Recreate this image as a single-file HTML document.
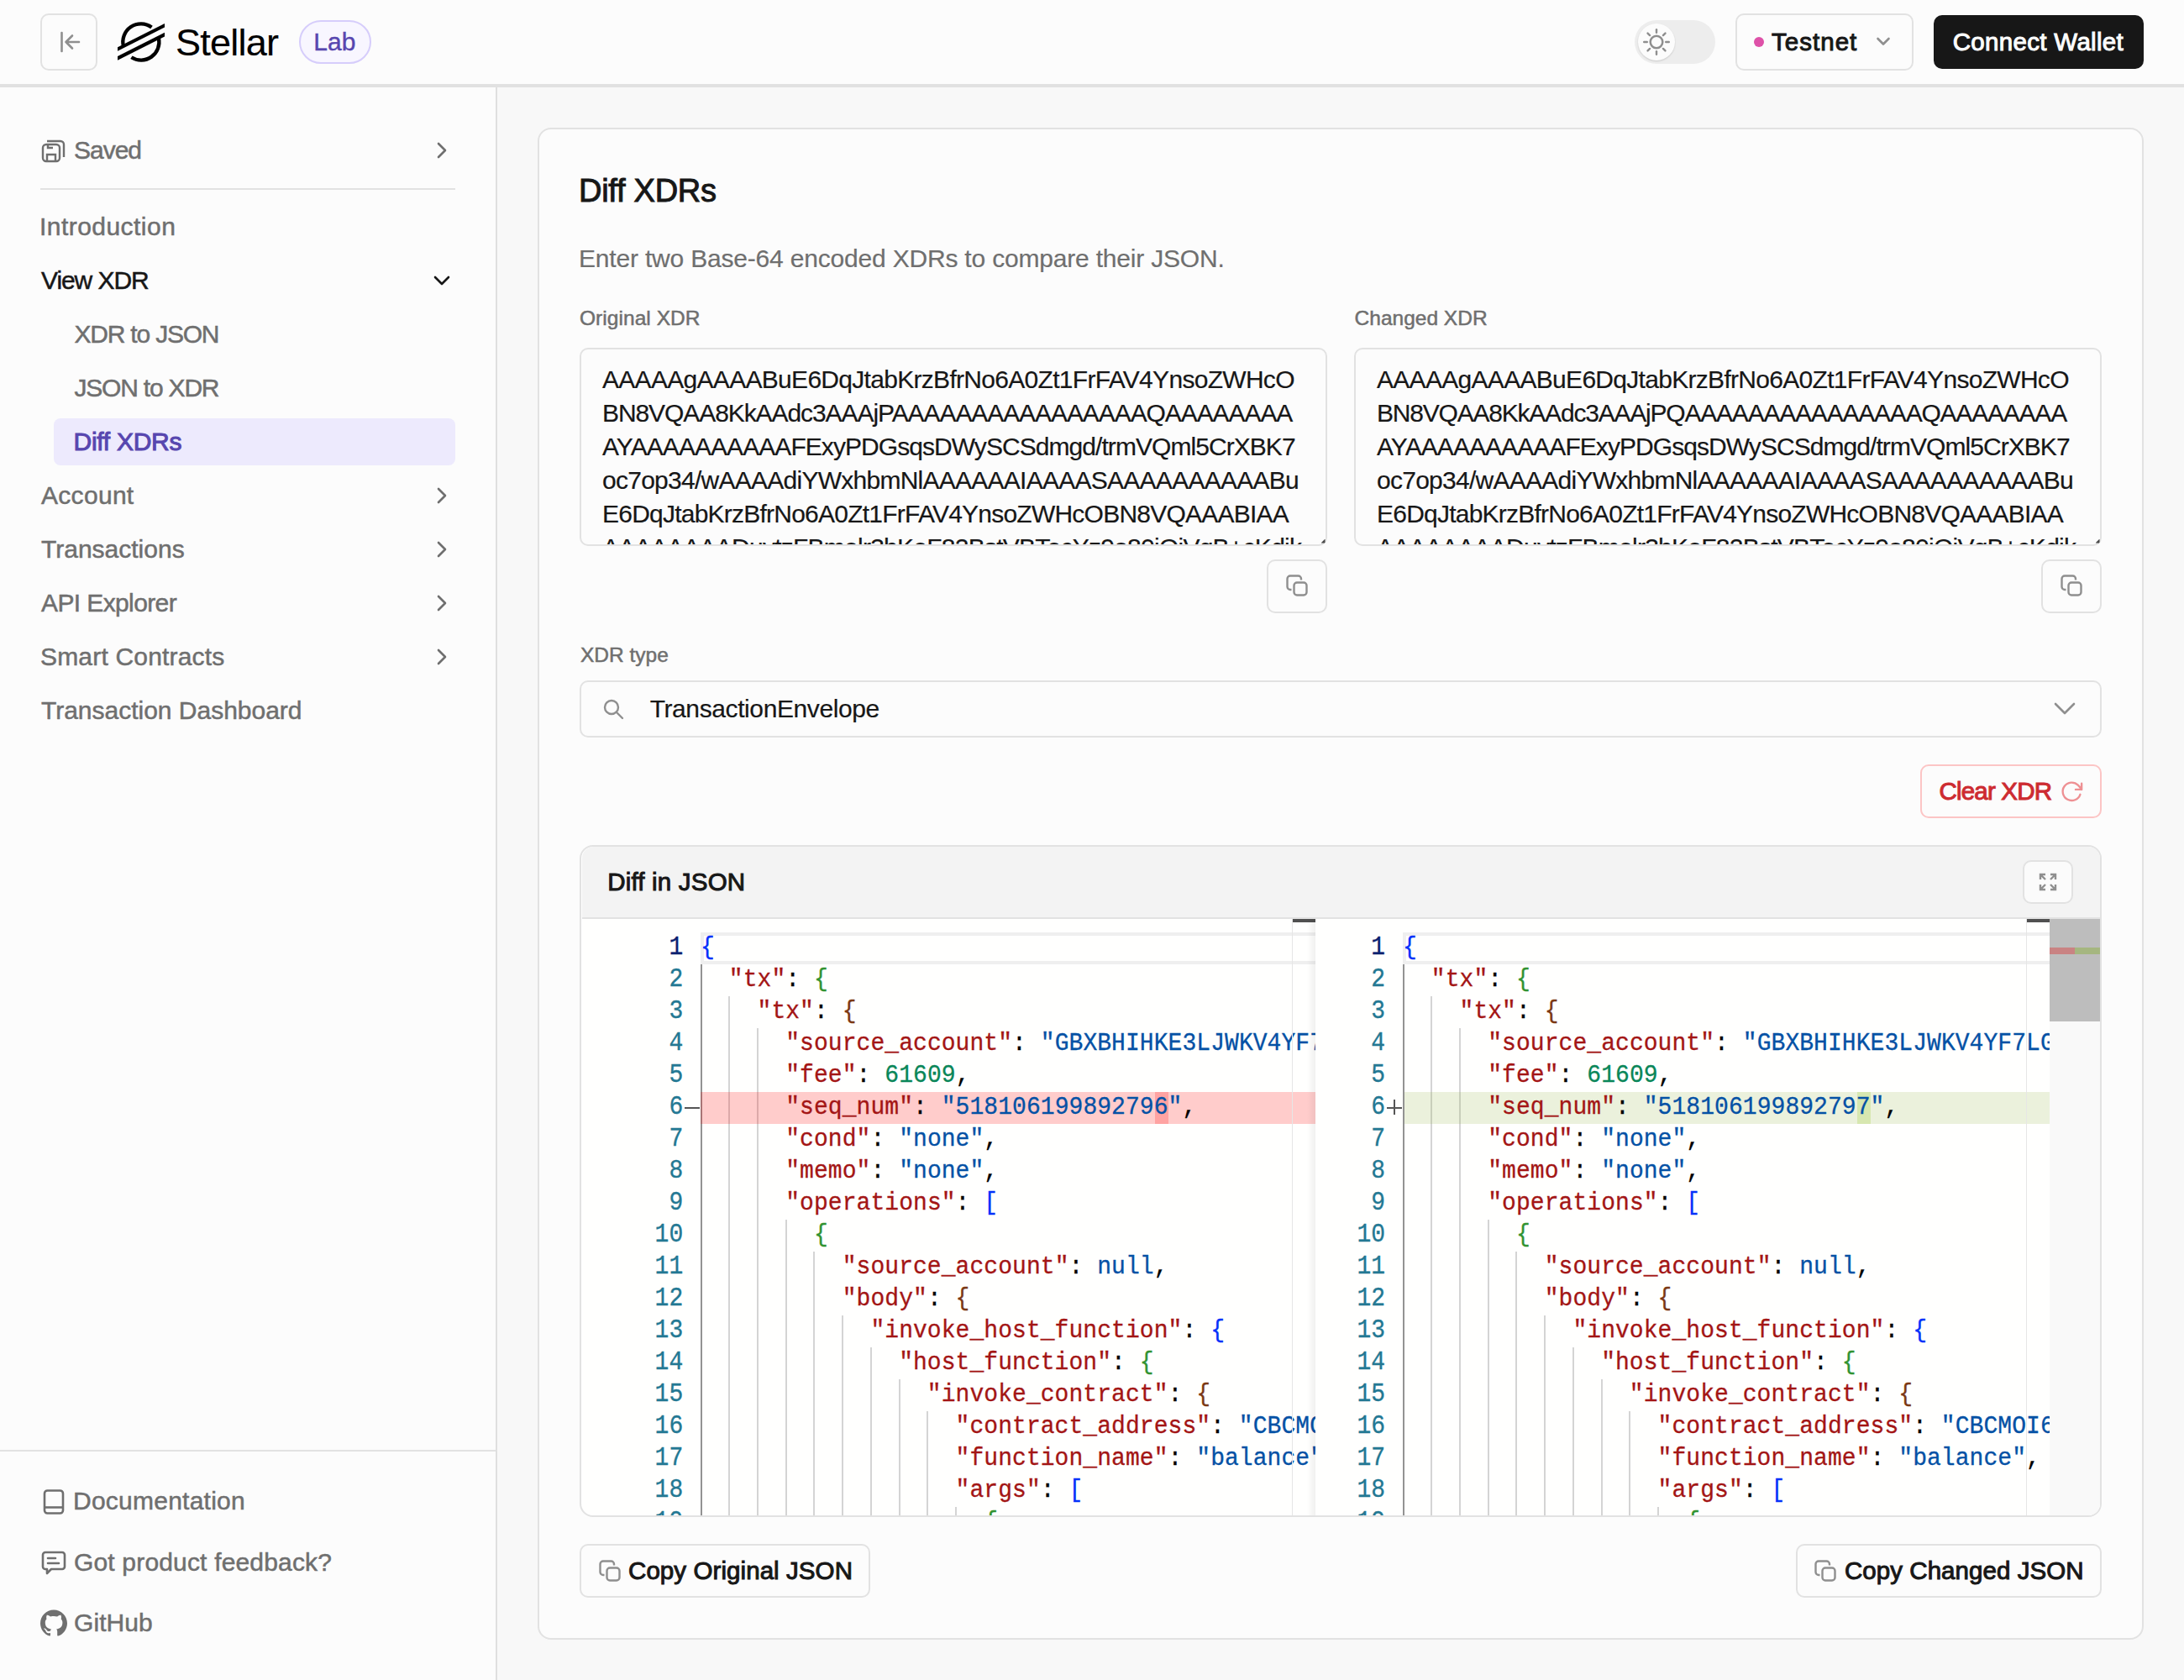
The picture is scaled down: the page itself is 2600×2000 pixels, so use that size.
<!DOCTYPE html><html><head><meta charset="utf-8"><style>
html,body{margin:0;padding:0;width:2600px;height:2000px;overflow:hidden;background:#f8f8f8}
.t{position:absolute;white-space:pre;font-family:"Liberation Sans",sans-serif}
.r{position:absolute;box-sizing:border-box}
.m{position:absolute;white-space:pre;font-family:"Liberation Mono",monospace;font-size:28px;line-height:38px;height:38px;color:#000;-webkit-text-stroke-width:0.3px;letter-spacing:0.06px}
</style></head><body>
<div class="r" style="left:0px;top:0px;width:2600px;height:2000px;background:#f8f8f8"></div>
<div class="r" style="left:0px;top:0px;width:2600px;height:100px;background:#fcfcfc"></div>
<div class="r" style="left:0px;top:100px;width:2600px;height:4px;background:#e1e1e1"></div>
<div class="r" style="left:0px;top:104px;width:590px;height:1896px;background:#fcfcfc"></div>
<div class="r" style="left:590px;top:104px;width:2px;height:1896px;background:#dfdfdf"></div>
<div class="r" style="left:48px;top:16px;width:68px;height:68px;border:2px solid #e2e2e2;border-radius:10px;box-sizing:border-box;background:#fcfcfc"></div>
<svg class="r" style="left:66px;top:34px;" width="36" height="32" viewBox="0 0 36 32" fill="none"><path d="M7.5 5 V27" stroke="#8f8f8f" stroke-width="2.6" stroke-linecap="round"/><path d="M28 16 H12.5 M20 8.5 L12.5 16 L20 23.5" stroke="#8f8f8f" stroke-width="2.6" stroke-linecap="round" stroke-linejoin="round"/></svg>
<svg class="r" style="left:140px;top:26px;" width="56" height="48" viewBox="0 0 56 48" fill="none"><path d="M7.0 29.2 A21.5 21.5 0 0 1 40.5 6.5" stroke="#000" stroke-width="4.3" fill="none"/><path d="M48.9 19.3 A21.5 21.5 0 0 1 16.4 42.2" stroke="#000" stroke-width="4.3" fill="none"/><path d="M0 30.25 L56 2 L56 6.5 L0 34.7 Z" fill="#000"/><path d="M0 41.1 L56 12.75 L56 17.4 L0 45.8 Z" fill="#000"/></svg>
<div class="t" style="left:209.0px;top:27.7px;font-size:45px;line-height:45px;color:#000;font-weight:400;letter-spacing:-0.76px;font-family:'Liberation Sans', sans-serif;-webkit-text-stroke:0.15px #000;">Stellar</div>
<div class="r" style="left:356px;top:24px;width:86px;height:52px;border:2px solid #d6cdfb;border-radius:26px;box-sizing:border-box;background:#f8f6ff"></div>
<div class="t" style="left:373.2px;top:34.6px;font-size:30px;line-height:30px;color:#5746af;font-weight:400;letter-spacing:0.12px;font-family:'Liberation Sans', sans-serif;-webkit-text-stroke:0.4px #5746af;">Lab</div>
<div class="r" style="left:1946px;top:24px;width:96px;height:52px;background:#ededed;border-radius:26px"></div>
<div class="r" style="left:1950px;top:28px;width:44px;height:44px;background:#fcfcfc;border-radius:50%;box-shadow:0 1px 2px rgba(0,0,0,0.15)"></div>
<svg class="r" style="left:1956px;top:33.5px;" width="32" height="32" viewBox="0 0 32 32" fill="none"><circle cx="16" cy="16" r="7.3" stroke="#8f8f8f" stroke-width="2.5"/><path d="M27.20 16.00 L30.80 16.00" stroke="#8f8f8f" stroke-width="2.4" stroke-linecap="round"/><path d="M23.92 23.92 L26.47 26.47" stroke="#8f8f8f" stroke-width="2.4" stroke-linecap="round"/><path d="M16.00 27.20 L16.00 30.80" stroke="#8f8f8f" stroke-width="2.4" stroke-linecap="round"/><path d="M8.08 23.92 L5.53 26.47" stroke="#8f8f8f" stroke-width="2.4" stroke-linecap="round"/><path d="M4.80 16.00 L1.20 16.00" stroke="#8f8f8f" stroke-width="2.4" stroke-linecap="round"/><path d="M8.08 8.08 L5.53 5.53" stroke="#8f8f8f" stroke-width="2.4" stroke-linecap="round"/><path d="M16.00 4.80 L16.00 1.20" stroke="#8f8f8f" stroke-width="2.4" stroke-linecap="round"/><path d="M23.92 8.08 L26.47 5.53" stroke="#8f8f8f" stroke-width="2.4" stroke-linecap="round"/></svg>
<div class="r" style="left:2066px;top:16px;width:212px;height:68px;border:2px solid #e2e2e2;border-radius:10px;box-sizing:border-box;background:#fcfcfc"></div>
<div class="r" style="left:2088px;top:44px;width:12px;height:12px;background:#de51a8;border-radius:50%"></div>
<div class="t" style="left:2109.0px;top:35.0px;font-size:29.5px;line-height:29.5px;color:#171717;font-weight:400;letter-spacing:1.03px;font-family:'Liberation Sans', sans-serif;-webkit-text-stroke:1.0px #171717;">Testnet</div>
<svg class="r" style="left:2232px;top:40px;" width="24" height="20" viewBox="0 0 24 20" fill="none"><path d="M3.5 6 L10 12.5 L16.5 6" stroke="#8f8f8f" stroke-width="2.6" stroke-linecap="round" stroke-linejoin="round"/></svg>
<div class="r" style="left:2302px;top:18px;width:250px;height:64px;background:#171717;border-radius:10px"></div>
<div class="t" style="left:2324.7px;top:35.0px;font-size:29.5px;line-height:29.5px;color:#fcfcfc;font-weight:400;letter-spacing:0.32px;font-family:'Liberation Sans', sans-serif;-webkit-text-stroke:1.0px #fcfcfc;">Connect Wallet</div>
<svg class="r" style="left:48px;top:165px;" width="32" height="30" viewBox="0 0 32 30" fill="none"><rect x="3" y="7" width="20" height="20" rx="4" stroke="#6f6f6f" stroke-width="2.4"/><path d="M8 27 V19 H18 V27" stroke="#6f6f6f" stroke-width="2.4"/><path d="M9 7 V11 H15" stroke="#6f6f6f" stroke-width="2.4"/><path d="M8 3 H24 A4 4 0 0 1 28 7 V22" stroke="#6f6f6f" stroke-width="2.4"/></svg>
<div class="t" style="left:88.0px;top:164.4px;font-size:30px;line-height:30px;color:#6f6f6f;font-weight:400;letter-spacing:-1.02px;font-family:'Liberation Sans', sans-serif;-webkit-text-stroke:0.5px #6f6f6f;">Saved</div>
<svg class="r" style="left:519px;top:169px;" width="14" height="20" viewBox="0 0 14 20" fill="none"><path d="M3 2 L11 10 L3 18" stroke="#6f6f6f" stroke-width="2.6" stroke-linecap="round" stroke-linejoin="round"/></svg>
<div class="r" style="left:48px;top:224px;width:494px;height:2px;background:#e2e2e2"></div>
<div class="r" style="left:64px;top:498px;width:478px;height:56px;background:#edeafd;border-radius:8px"></div>
<div class="t" style="left:47.0px;top:254.6px;font-size:30px;line-height:30px;color:#6f6f6f;font-weight:400;letter-spacing:0.46px;font-family:'Liberation Sans', sans-serif;-webkit-text-stroke:0.5px #6f6f6f;">Introduction</div>
<div class="t" style="left:49.0px;top:318.6px;font-size:30px;line-height:30px;color:#171717;font-weight:400;letter-spacing:-1.07px;font-family:'Liberation Sans', sans-serif;-webkit-text-stroke:0.5px #171717;">View XDR</div>
<div class="t" style="left:88.5px;top:382.6px;font-size:30px;line-height:30px;color:#6f6f6f;font-weight:400;letter-spacing:-1.20px;font-family:'Liberation Sans', sans-serif;-webkit-text-stroke:0.5px #6f6f6f;">XDR to JSON</div>
<div class="t" style="left:88.5px;top:446.6px;font-size:30px;line-height:30px;color:#6f6f6f;font-weight:400;letter-spacing:-1.20px;font-family:'Liberation Sans', sans-serif;-webkit-text-stroke:0.5px #6f6f6f;">JSON to XDR</div>
<div class="t" style="left:87.6px;top:510.6px;font-size:30px;line-height:30px;color:#5746af;font-weight:400;letter-spacing:-0.29px;font-family:'Liberation Sans', sans-serif;-webkit-text-stroke:1.0px #5746af;">Diff XDRs</div>
<div class="t" style="left:49.0px;top:574.6px;font-size:30px;line-height:30px;color:#6f6f6f;font-weight:400;letter-spacing:0.30px;font-family:'Liberation Sans', sans-serif;-webkit-text-stroke:0.5px #6f6f6f;">Account</div>
<svg class="r" style="left:519px;top:580px;" width="14" height="20" viewBox="0 0 14 20" fill="none"><path d="M3 2 L11 10 L3 18" stroke="#6f6f6f" stroke-width="2.6" stroke-linecap="round" stroke-linejoin="round"/></svg>
<div class="t" style="left:49.0px;top:638.6px;font-size:30px;line-height:30px;color:#6f6f6f;font-weight:400;letter-spacing:-0.00px;font-family:'Liberation Sans', sans-serif;-webkit-text-stroke:0.5px #6f6f6f;">Transactions</div>
<svg class="r" style="left:519px;top:644px;" width="14" height="20" viewBox="0 0 14 20" fill="none"><path d="M3 2 L11 10 L3 18" stroke="#6f6f6f" stroke-width="2.6" stroke-linecap="round" stroke-linejoin="round"/></svg>
<div class="t" style="left:49.0px;top:702.6px;font-size:30px;line-height:30px;color:#6f6f6f;font-weight:400;letter-spacing:-0.61px;font-family:'Liberation Sans', sans-serif;-webkit-text-stroke:0.5px #6f6f6f;">API Explorer</div>
<svg class="r" style="left:519px;top:708px;" width="14" height="20" viewBox="0 0 14 20" fill="none"><path d="M3 2 L11 10 L3 18" stroke="#6f6f6f" stroke-width="2.6" stroke-linecap="round" stroke-linejoin="round"/></svg>
<div class="t" style="left:48.0px;top:766.6px;font-size:30px;line-height:30px;color:#6f6f6f;font-weight:400;letter-spacing:0.18px;font-family:'Liberation Sans', sans-serif;-webkit-text-stroke:0.5px #6f6f6f;">Smart Contracts</div>
<svg class="r" style="left:519px;top:772px;" width="14" height="20" viewBox="0 0 14 20" fill="none"><path d="M3 2 L11 10 L3 18" stroke="#6f6f6f" stroke-width="2.6" stroke-linecap="round" stroke-linejoin="round"/></svg>
<div class="t" style="left:49.0px;top:830.6px;font-size:30px;line-height:30px;color:#6f6f6f;font-weight:400;letter-spacing:-0.01px;font-family:'Liberation Sans', sans-serif;-webkit-text-stroke:0.5px #6f6f6f;">Transaction Dashboard</div>
<svg class="r" style="left:515px;top:327px;" width="22" height="16" viewBox="0 0 22 16" fill="none"><path d="M3 3 L11 11 L19 3" stroke="#171717" stroke-width="2.6" stroke-linecap="round" stroke-linejoin="round"/></svg>
<div class="r" style="left:0px;top:1726px;width:590px;height:2px;background:#e2e2e2"></div>
<svg class="r" style="left:50px;top:1772px;" width="28" height="32" viewBox="0 0 28 32" fill="none"><rect x="3" y="2.5" width="22" height="27" rx="3.5" stroke="#6f6f6f" stroke-width="2.6"/><path d="M3 22.5 H25" stroke="#6f6f6f" stroke-width="2.6"/></svg>
<div class="t" style="left:87.0px;top:1772.4px;font-size:30px;line-height:30px;color:#6f6f6f;font-weight:400;letter-spacing:0.24px;font-family:'Liberation Sans', sans-serif;-webkit-text-stroke:0.5px #6f6f6f;">Documentation</div>
<svg class="r" style="left:49px;top:1845px;" width="30" height="30" viewBox="0 0 30 30" fill="none"><path d="M5 3 H25 A3 3 0 0 1 28 6 V20 A3 3 0 0 1 25 23 H12 L7 28 V23 H5 A3 3 0 0 1 2 20 V6 A3 3 0 0 1 5 3 Z" stroke="#6f6f6f" stroke-width="2.6" stroke-linejoin="round"/><path d="M8 10 H17 M8 16 H21" stroke="#6f6f6f" stroke-width="2.6" stroke-linecap="round"/></svg>
<div class="t" style="left:88.0px;top:1844.5px;font-size:30px;line-height:30px;color:#6f6f6f;font-weight:400;letter-spacing:0.17px;font-family:'Liberation Sans', sans-serif;-webkit-text-stroke:0.5px #6f6f6f;">Got product feedback?</div>
<svg class="r" style="left:48px;top:1916px;" width="32" height="32" viewBox="0 0 32 32" fill="none"><path fill="#6f6f6f" d="M16 0.4C7.2 0.4 0 7.6 0 16.4c0 7.1 4.6 13.100 10.900 15.200 0.8 0.1 1.100-0.3 1.100-0.8v-2.800c-4.500 1-5.400-2.100-5.400-2.100-0.700-1.900-1.800-2.400-1.800-2.400-1.500-1 0.100-1 0.100-1 1.600 0.1 2.500 1.700 2.500 1.700 1.400 2.500 3.800 1.800 4.700 1.400 0.1-1 0.600-1.800 1-2.200-3.600-0.400-7.300-1.800-7.300-7.900 0-1.800 0.600-3.200 1.700-4.300-0.2-0.400-0.700-2.100 0.200-4.300 0 0 1.300-0.4 4.400 1.700 1.300-0.4 2.600-0.5 4-0.5s2.700 0.2 4 0.5c3.100-2.100 4.400-1.700 4.400-1.700 0.900 2.200 0.300 3.900 0.200 4.300 1 1.100 1.700 2.600 1.700 4.300 0 6.100-3.700 7.500-7.300 7.900 0.600 0.500 1.100 1.500 1.100 2.900v4.400c0 0.400 0.300 0.900 1.100 0.800C27.400 29.500 32 23.500 32 16.400 32 7.600 24.800 0.400 16 0.400z"/></svg>
<div class="t" style="left:88.0px;top:1916.6px;font-size:30px;line-height:30px;color:#6f6f6f;font-weight:400;letter-spacing:0.07px;font-family:'Liberation Sans', sans-serif;-webkit-text-stroke:0.5px #6f6f6f;">GitHub</div>
<div class="r" style="left:640px;top:152px;width:1912px;height:1800px;border:2px solid #e2e2e2;border-radius:16px;box-sizing:border-box;background:#fcfcfc"></div>
<div class="t" style="left:689.0px;top:208.3px;font-size:38px;line-height:38px;color:#171717;font-weight:400;letter-spacing:-0.26px;font-family:'Liberation Sans', sans-serif;-webkit-text-stroke:1.0px #171717;">Diff XDRs</div>
<div class="t" style="left:689.0px;top:292.8px;font-size:30px;line-height:30px;color:#6f6f6f;font-weight:400;letter-spacing:-0.19px;font-family:'Liberation Sans', sans-serif;-webkit-text-stroke:0.2px #6f6f6f;">Enter two Base-64 encoded XDRs to compare their JSON.</div>
<div class="t" style="left:690.0px;top:367.3px;font-size:24.5px;line-height:24.5px;color:#6f6f6f;font-weight:400;letter-spacing:0.05px;font-family:'Liberation Sans', sans-serif;-webkit-text-stroke:0.5px #6f6f6f;">Original XDR</div>
<div class="t" style="left:1612.6px;top:367.3px;font-size:24.5px;line-height:24.5px;color:#6f6f6f;font-weight:400;letter-spacing:0.00px;font-family:'Liberation Sans', sans-serif;-webkit-text-stroke:0.5px #6f6f6f;">Changed XDR</div>
<div class="r" style="left:690px;top:414px;width:890px;height:236px;border:2px solid #e2e2e2;border-radius:10px;box-sizing:border-box;background:#fcfcfc;overflow:hidden">
<div class="t" style="left:25.0px;top:20.6px;font-size:30px;line-height:30px;color:#171717;font-weight:400;letter-spacing:-0.70px;font-family:'Liberation Sans', sans-serif;-webkit-text-stroke:0.2px #171717;">AAAAAgAAAABuE6DqJtabKrzBfrNo6A0Zt1FrFAV4YnsoZWHcO</div>
<div class="t" style="left:25.0px;top:60.6px;font-size:30px;line-height:30px;color:#171717;font-weight:400;letter-spacing:-1.08px;font-family:'Liberation Sans', sans-serif;-webkit-text-stroke:0.2px #171717;">BN8VQAA8KkAAdc3AAAjPAAAAAAAAAAAAAAAAQAAAAAAAA</div>
<div class="t" style="left:25.0px;top:100.6px;font-size:30px;line-height:30px;color:#171717;font-weight:400;letter-spacing:-0.94px;font-family:'Liberation Sans', sans-serif;-webkit-text-stroke:0.2px #171717;">AYAAAAAAAAAAFExyPDGsqsDWySCSdmgd/trmVQml5CrXBK7</div>
<div class="t" style="left:25.0px;top:140.6px;font-size:30px;line-height:30px;color:#171717;font-weight:400;letter-spacing:-0.74px;font-family:'Liberation Sans', sans-serif;-webkit-text-stroke:0.2px #171717;">oc7op34/wAAAAdiYWxhbmNlAAAAAAIAAAASAAAAAAAAAABu</div>
<div class="t" style="left:25.0px;top:180.6px;font-size:30px;line-height:30px;color:#171717;font-weight:400;letter-spacing:-0.77px;font-family:'Liberation Sans', sans-serif;-webkit-text-stroke:0.2px #171717;">E6DqJtabKrzBfrNo6A0Zt1FrFAV4YnsoZWHcOBN8VQAAABIAA</div>
<div class="t" style="left:25.0px;top:220.6px;font-size:30px;line-height:30px;color:#171717;font-weight:400;letter-spacing:-0.75px;font-family:'Liberation Sans', sans-serif;-webkit-text-stroke:0.2px #171717;">AAAAAAAADuvtzFBmelr3hKeF82BstVBTecYz9o80iQiVqB+cKdik</div>
</div>
<div class="r" style="left:1612px;top:414px;width:890px;height:236px;border:2px solid #e2e2e2;border-radius:10px;box-sizing:border-box;background:#fcfcfc;overflow:hidden">
<div class="t" style="left:25.0px;top:20.6px;font-size:30px;line-height:30px;color:#171717;font-weight:400;letter-spacing:-0.70px;font-family:'Liberation Sans', sans-serif;-webkit-text-stroke:0.2px #171717;">AAAAAgAAAABuE6DqJtabKrzBfrNo6A0Zt1FrFAV4YnsoZWHcO</div>
<div class="t" style="left:25.0px;top:60.6px;font-size:30px;line-height:30px;color:#171717;font-weight:400;letter-spacing:-1.21px;font-family:'Liberation Sans', sans-serif;-webkit-text-stroke:0.2px #171717;">BN8VQAA8KkAAdc3AAAjPQAAAAAAAAAAAAAAAQAAAAAAAA</div>
<div class="t" style="left:25.0px;top:100.6px;font-size:30px;line-height:30px;color:#171717;font-weight:400;letter-spacing:-0.94px;font-family:'Liberation Sans', sans-serif;-webkit-text-stroke:0.2px #171717;">AYAAAAAAAAAAFExyPDGsqsDWySCSdmgd/trmVQml5CrXBK7</div>
<div class="t" style="left:25.0px;top:140.6px;font-size:30px;line-height:30px;color:#171717;font-weight:400;letter-spacing:-0.74px;font-family:'Liberation Sans', sans-serif;-webkit-text-stroke:0.2px #171717;">oc7op34/wAAAAdiYWxhbmNlAAAAAAIAAAASAAAAAAAAAABu</div>
<div class="t" style="left:25.0px;top:180.6px;font-size:30px;line-height:30px;color:#171717;font-weight:400;letter-spacing:-0.77px;font-family:'Liberation Sans', sans-serif;-webkit-text-stroke:0.2px #171717;">E6DqJtabKrzBfrNo6A0Zt1FrFAV4YnsoZWHcOBN8VQAAABIAA</div>
<div class="t" style="left:25.0px;top:220.6px;font-size:30px;line-height:30px;color:#171717;font-weight:400;letter-spacing:-0.75px;font-family:'Liberation Sans', sans-serif;-webkit-text-stroke:0.2px #171717;">AAAAAAAADuvtzFBmelr3hKeF82BstVBTecYz9o80iQiVqB+cKdik</div>
</div>
<svg class="r" style="left:1573px;top:642px;" width="5" height="5" viewBox="0 0 5 5" fill="none"><path d="M0.5 4.5 L4.5 0.5 M2.5 4.5 L4.5 2.5" stroke="#444" stroke-width="1.4"/></svg>
<svg class="r" style="left:2495px;top:642px;" width="5" height="5" viewBox="0 0 5 5" fill="none"><path d="M0.5 4.5 L4.5 0.5 M2.5 4.5 L4.5 2.5" stroke="#444" stroke-width="1.4"/></svg>
<div class="r" style="left:1508px;top:666px;width:72px;height:64px;border:2px solid #e2e2e2;border-radius:10px;box-sizing:border-box;background:#fcfcfc"></div>
<svg class="r" style="left:1530px;top:683px;" width="28" height="28" viewBox="0 0 28 28" fill="none"><path d="M7.5 19 H6 A3.5 3.5 0 0 1 2.5 15.5 V6 A3.5 3.5 0 0 1 6 2.5 H15.5 A3.5 3.5 0 0 1 19 6 V7.5" stroke="#8f8f8f" stroke-width="2.4"/><rect x="10.5" y="10.5" width="15" height="15" rx="3.5" stroke="#8f8f8f" stroke-width="2.4"/></svg>
<div class="r" style="left:2430px;top:666px;width:72px;height:64px;border:2px solid #e2e2e2;border-radius:10px;box-sizing:border-box;background:#fcfcfc"></div>
<svg class="r" style="left:2452px;top:683px;" width="28" height="28" viewBox="0 0 28 28" fill="none"><path d="M7.5 19 H6 A3.5 3.5 0 0 1 2.5 15.5 V6 A3.5 3.5 0 0 1 6 2.5 H15.5 A3.5 3.5 0 0 1 19 6 V7.5" stroke="#8f8f8f" stroke-width="2.4"/><rect x="10.5" y="10.5" width="15" height="15" rx="3.5" stroke="#8f8f8f" stroke-width="2.4"/></svg>
<div class="t" style="left:691.0px;top:767.8px;font-size:24.5px;line-height:24.5px;color:#6f6f6f;font-weight:400;letter-spacing:-0.01px;font-family:'Liberation Sans', sans-serif;-webkit-text-stroke:0.5px #6f6f6f;">XDR type</div>
<div class="r" style="left:690px;top:810px;width:1812px;height:68px;border:2px solid #e2e2e2;border-radius:10px;box-sizing:border-box;background:#fcfcfc"></div>
<svg class="r" style="left:717px;top:830.5px;" width="28" height="28" viewBox="0 0 28 28" fill="none"><circle cx="11" cy="11" r="8" stroke="#8f8f8f" stroke-width="2.4"/><path d="M17 17 L24 24" stroke="#8f8f8f" stroke-width="2.4" stroke-linecap="round"/></svg>
<div class="t" style="left:773.7px;top:829.0px;font-size:30px;line-height:30px;color:#171717;font-weight:400;letter-spacing:-0.40px;font-family:'Liberation Sans', sans-serif;-webkit-text-stroke:0.2px #171717;">TransactionEnvelope</div>
<svg class="r" style="left:2444px;top:834px;" width="28" height="20" viewBox="0 0 28 20" fill="none"><path d="M3 4 L14 15 L25 4" stroke="#8f8f8f" stroke-width="2.6" stroke-linecap="round" stroke-linejoin="round"/></svg>
<div class="r" style="left:2286px;top:910px;width:216px;height:64px;border:2px solid #fcc5c5;border-radius:10px;box-sizing:border-box;background:#fcfcfc"></div>
<div class="t" style="left:2308.5px;top:927.0px;font-size:29.5px;line-height:29.5px;color:#cd2b31;font-weight:400;letter-spacing:-0.81px;font-family:'Liberation Sans', sans-serif;-webkit-text-stroke:1.0px #cd2b31;">Clear XDR</div>
<svg class="r" style="left:2451.7px;top:927.9px" width="28.5" height="28.5" viewBox="0 0 24 24" fill="none"><path d="M22 10s-2.005-2.732-3.634-4.362A9 9 0 1 0 20.576 15M22 10V4m0 6h-6" stroke="#e5484d" stroke-opacity="0.6" stroke-width="2" stroke-linecap="round" stroke-linejoin="round"/></svg>
<div class="r" style="left:690px;top:1006px;width:1812px;height:800px;border:2px solid #e2e2e2;border-radius:16px;box-sizing:border-box;background:#fefefe;overflow:hidden"></div>
<div class="r" style="left:693px;top:1008px;width:1807px;height:84px;background:#f3f3f3;border-radius:14px 14px 0 0"></div>
<div class="r" style="left:693px;top:1092px;width:1807px;height:2px;background:#e2e2e2"></div>
<div class="t" style="left:723.2px;top:1035.2px;font-size:29.5px;line-height:29.5px;color:#171717;font-weight:400;letter-spacing:0.20px;font-family:'Liberation Sans', sans-serif;-webkit-text-stroke:1.0px #171717;">Diff in JSON</div>
<div class="r" style="left:2408px;top:1024px;width:60px;height:52px;border:2px solid #e2e2e2;border-radius:10px;box-sizing:border-box;background:#fbfbfb"></div>
<svg class="r" style="left:2426px;top:1038px;" width="24" height="24" viewBox="0 0 24 24" fill="none"><path d="M3 9 V3 H9 M3 3 L9 9 M15 3 H21 V9 M21 3 L15 9 M3 15 V21 H9 M3 21 L9 15 M21 15 V21 H15 M21 21 L15 15" stroke="#8f8f8f" stroke-width="2.4"/></svg>
<div class="r" style="left:0;top:0;width:2600px;height:2000px;clip-path:inset(1094px 100px 196px 693px round 0 0 14px 14px)">
<div class="r" style="left:692px;top:1094px;width:874px;height:710px;overflow:hidden;background:#fffffe">
<div class="r" style="left:142px;top:16px;width:732px;height:38px;border:4px solid #efefef;border-right:none;box-sizing:border-box"></div>
<div class="r" style="left:142px;top:54px;width:2px;height:38px;background:#939393"></div>
<div class="r" style="left:142px;top:92px;width:2px;height:38px;background:#939393"></div>
<div class="r" style="left:175px;top:92px;width:2px;height:38px;background:#d4d4d4"></div>
<div class="r" style="left:142px;top:130px;width:2px;height:38px;background:#939393"></div>
<div class="r" style="left:175px;top:130px;width:2px;height:38px;background:#d4d4d4"></div>
<div class="r" style="left:209px;top:130px;width:2px;height:38px;background:#d4d4d4"></div>
<div class="r" style="left:142px;top:168px;width:2px;height:38px;background:#939393"></div>
<div class="r" style="left:175px;top:168px;width:2px;height:38px;background:#d4d4d4"></div>
<div class="r" style="left:209px;top:168px;width:2px;height:38px;background:#d4d4d4"></div>
<div class="r" style="left:142px;top:206px;width:2px;height:38px;background:#939393"></div>
<div class="r" style="left:175px;top:206px;width:2px;height:38px;background:#d4d4d4"></div>
<div class="r" style="left:209px;top:206px;width:2px;height:38px;background:#d4d4d4"></div>
<div class="r" style="left:142px;top:244px;width:2px;height:38px;background:#939393"></div>
<div class="r" style="left:175px;top:244px;width:2px;height:38px;background:#d4d4d4"></div>
<div class="r" style="left:209px;top:244px;width:2px;height:38px;background:#d4d4d4"></div>
<div class="r" style="left:142px;top:282px;width:2px;height:38px;background:#939393"></div>
<div class="r" style="left:175px;top:282px;width:2px;height:38px;background:#d4d4d4"></div>
<div class="r" style="left:209px;top:282px;width:2px;height:38px;background:#d4d4d4"></div>
<div class="r" style="left:142px;top:320px;width:2px;height:38px;background:#939393"></div>
<div class="r" style="left:175px;top:320px;width:2px;height:38px;background:#d4d4d4"></div>
<div class="r" style="left:209px;top:320px;width:2px;height:38px;background:#d4d4d4"></div>
<div class="r" style="left:142px;top:358px;width:2px;height:38px;background:#939393"></div>
<div class="r" style="left:175px;top:358px;width:2px;height:38px;background:#d4d4d4"></div>
<div class="r" style="left:209px;top:358px;width:2px;height:38px;background:#d4d4d4"></div>
<div class="r" style="left:243px;top:358px;width:2px;height:38px;background:#d4d4d4"></div>
<div class="r" style="left:142px;top:396px;width:2px;height:38px;background:#939393"></div>
<div class="r" style="left:175px;top:396px;width:2px;height:38px;background:#d4d4d4"></div>
<div class="r" style="left:209px;top:396px;width:2px;height:38px;background:#d4d4d4"></div>
<div class="r" style="left:243px;top:396px;width:2px;height:38px;background:#d4d4d4"></div>
<div class="r" style="left:276px;top:396px;width:2px;height:38px;background:#d4d4d4"></div>
<div class="r" style="left:142px;top:434px;width:2px;height:38px;background:#939393"></div>
<div class="r" style="left:175px;top:434px;width:2px;height:38px;background:#d4d4d4"></div>
<div class="r" style="left:209px;top:434px;width:2px;height:38px;background:#d4d4d4"></div>
<div class="r" style="left:243px;top:434px;width:2px;height:38px;background:#d4d4d4"></div>
<div class="r" style="left:276px;top:434px;width:2px;height:38px;background:#d4d4d4"></div>
<div class="r" style="left:142px;top:472px;width:2px;height:38px;background:#939393"></div>
<div class="r" style="left:175px;top:472px;width:2px;height:38px;background:#d4d4d4"></div>
<div class="r" style="left:209px;top:472px;width:2px;height:38px;background:#d4d4d4"></div>
<div class="r" style="left:243px;top:472px;width:2px;height:38px;background:#d4d4d4"></div>
<div class="r" style="left:276px;top:472px;width:2px;height:38px;background:#d4d4d4"></div>
<div class="r" style="left:310px;top:472px;width:2px;height:38px;background:#d4d4d4"></div>
<div class="r" style="left:142px;top:510px;width:2px;height:38px;background:#939393"></div>
<div class="r" style="left:175px;top:510px;width:2px;height:38px;background:#d4d4d4"></div>
<div class="r" style="left:209px;top:510px;width:2px;height:38px;background:#d4d4d4"></div>
<div class="r" style="left:243px;top:510px;width:2px;height:38px;background:#d4d4d4"></div>
<div class="r" style="left:276px;top:510px;width:2px;height:38px;background:#d4d4d4"></div>
<div class="r" style="left:310px;top:510px;width:2px;height:38px;background:#d4d4d4"></div>
<div class="r" style="left:344px;top:510px;width:2px;height:38px;background:#d4d4d4"></div>
<div class="r" style="left:142px;top:548px;width:2px;height:38px;background:#939393"></div>
<div class="r" style="left:175px;top:548px;width:2px;height:38px;background:#d4d4d4"></div>
<div class="r" style="left:209px;top:548px;width:2px;height:38px;background:#d4d4d4"></div>
<div class="r" style="left:243px;top:548px;width:2px;height:38px;background:#d4d4d4"></div>
<div class="r" style="left:276px;top:548px;width:2px;height:38px;background:#d4d4d4"></div>
<div class="r" style="left:310px;top:548px;width:2px;height:38px;background:#d4d4d4"></div>
<div class="r" style="left:344px;top:548px;width:2px;height:38px;background:#d4d4d4"></div>
<div class="r" style="left:378px;top:548px;width:2px;height:38px;background:#d4d4d4"></div>
<div class="r" style="left:142px;top:586px;width:2px;height:38px;background:#939393"></div>
<div class="r" style="left:175px;top:586px;width:2px;height:38px;background:#d4d4d4"></div>
<div class="r" style="left:209px;top:586px;width:2px;height:38px;background:#d4d4d4"></div>
<div class="r" style="left:243px;top:586px;width:2px;height:38px;background:#d4d4d4"></div>
<div class="r" style="left:276px;top:586px;width:2px;height:38px;background:#d4d4d4"></div>
<div class="r" style="left:310px;top:586px;width:2px;height:38px;background:#d4d4d4"></div>
<div class="r" style="left:344px;top:586px;width:2px;height:38px;background:#d4d4d4"></div>
<div class="r" style="left:378px;top:586px;width:2px;height:38px;background:#d4d4d4"></div>
<div class="r" style="left:411px;top:586px;width:2px;height:38px;background:#d4d4d4"></div>
<div class="r" style="left:142px;top:624px;width:2px;height:38px;background:#939393"></div>
<div class="r" style="left:175px;top:624px;width:2px;height:38px;background:#d4d4d4"></div>
<div class="r" style="left:209px;top:624px;width:2px;height:38px;background:#d4d4d4"></div>
<div class="r" style="left:243px;top:624px;width:2px;height:38px;background:#d4d4d4"></div>
<div class="r" style="left:276px;top:624px;width:2px;height:38px;background:#d4d4d4"></div>
<div class="r" style="left:310px;top:624px;width:2px;height:38px;background:#d4d4d4"></div>
<div class="r" style="left:344px;top:624px;width:2px;height:38px;background:#d4d4d4"></div>
<div class="r" style="left:378px;top:624px;width:2px;height:38px;background:#d4d4d4"></div>
<div class="r" style="left:411px;top:624px;width:2px;height:38px;background:#d4d4d4"></div>
<div class="r" style="left:142px;top:662px;width:2px;height:38px;background:#939393"></div>
<div class="r" style="left:175px;top:662px;width:2px;height:38px;background:#d4d4d4"></div>
<div class="r" style="left:209px;top:662px;width:2px;height:38px;background:#d4d4d4"></div>
<div class="r" style="left:243px;top:662px;width:2px;height:38px;background:#d4d4d4"></div>
<div class="r" style="left:276px;top:662px;width:2px;height:38px;background:#d4d4d4"></div>
<div class="r" style="left:310px;top:662px;width:2px;height:38px;background:#d4d4d4"></div>
<div class="r" style="left:344px;top:662px;width:2px;height:38px;background:#d4d4d4"></div>
<div class="r" style="left:378px;top:662px;width:2px;height:38px;background:#d4d4d4"></div>
<div class="r" style="left:411px;top:662px;width:2px;height:38px;background:#d4d4d4"></div>
<div class="r" style="left:142px;top:700px;width:2px;height:38px;background:#939393"></div>
<div class="r" style="left:175px;top:700px;width:2px;height:38px;background:#d4d4d4"></div>
<div class="r" style="left:209px;top:700px;width:2px;height:38px;background:#d4d4d4"></div>
<div class="r" style="left:243px;top:700px;width:2px;height:38px;background:#d4d4d4"></div>
<div class="r" style="left:276px;top:700px;width:2px;height:38px;background:#d4d4d4"></div>
<div class="r" style="left:310px;top:700px;width:2px;height:38px;background:#d4d4d4"></div>
<div class="r" style="left:344px;top:700px;width:2px;height:38px;background:#d4d4d4"></div>
<div class="r" style="left:378px;top:700px;width:2px;height:38px;background:#d4d4d4"></div>
<div class="r" style="left:411px;top:700px;width:2px;height:38px;background:#d4d4d4"></div>
<div class="r" style="left:445px;top:700px;width:2px;height:38px;background:#d4d4d4"></div>
<div class="r" style="left:142px;top:206px;width:732px;height:38px;background:rgba(255,0,0,0.2)"></div>
<div class="r" style="left:683px;top:206px;width:16px;height:38px;background:rgba(255,0,0,0.2)"></div>
<div class="r" style="left:0;top:0;width:874px;height:710px;overflow:hidden">
<div class="m" style="right:752.7px;top:16px;color:#0b216f;transform:scaleY(1.11);transform-origin:0 26.5px">1</div>
<div class="m" style="left:142.1px;top:16px;transform:scaleY(1.07);transform-origin:0 26.5px"><span style="color:#0431fa">{</span></div>
<div class="m" style="right:752.7px;top:54px;color:#237893;transform:scaleY(1.11);transform-origin:0 26.5px">2</div>
<div class="m" style="left:175.82000000000002px;top:54px;transform:scaleY(1.07);transform-origin:0 26.5px"><span style="color:#a31515">&quot;tx&quot;</span><span style="color:#000000">: </span><span style="color:#319331">{</span></div>
<div class="m" style="right:752.7px;top:92px;color:#237893;transform:scaleY(1.11);transform-origin:0 26.5px">3</div>
<div class="m" style="left:209.54000000000005px;top:92px;transform:scaleY(1.07);transform-origin:0 26.5px"><span style="color:#a31515">&quot;tx&quot;</span><span style="color:#000000">: </span><span style="color:#7b3814">{</span></div>
<div class="m" style="right:752.7px;top:130px;color:#237893;transform:scaleY(1.11);transform-origin:0 26.5px">4</div>
<div class="m" style="left:243.25999999999996px;top:130px;transform:scaleY(1.07);transform-origin:0 26.5px"><span style="color:#a31515">&quot;source_account&quot;</span><span style="color:#000000">: </span><span style="color:#0451a5">&quot;GBXBHIHKE3LJWKV4YF7LG2HIBUM3OULLCQCXQYT3FBSWDXBYCN6FK5LP&quot;</span><span style="color:#000000">,</span></div>
<div class="m" style="right:752.7px;top:168px;color:#237893;transform:scaleY(1.11);transform-origin:0 26.5px">5</div>
<div class="m" style="left:243.25999999999996px;top:168px;transform:scaleY(1.07);transform-origin:0 26.5px"><span style="color:#a31515">&quot;fee&quot;</span><span style="color:#000000">: </span><span style="color:#098658">61609</span><span style="color:#000000">,</span></div>
<div class="m" style="right:752.7px;top:206px;color:#237893;transform:scaleY(1.11);transform-origin:0 26.5px">6</div>
<div class="m" style="left:243.25999999999996px;top:206px;transform:scaleY(1.07);transform-origin:0 26.5px"><span style="color:#a31515">&quot;seq_num&quot;</span><span style="color:#000000">: </span><span style="color:#0451a5">&quot;518106199892796&quot;</span><span style="color:#000000">,</span></div>
<div class="m" style="right:752.7px;top:244px;color:#237893;transform:scaleY(1.11);transform-origin:0 26.5px">7</div>
<div class="m" style="left:243.25999999999996px;top:244px;transform:scaleY(1.07);transform-origin:0 26.5px"><span style="color:#a31515">&quot;cond&quot;</span><span style="color:#000000">: </span><span style="color:#0451a5">&quot;none&quot;</span><span style="color:#000000">,</span></div>
<div class="m" style="right:752.7px;top:282px;color:#237893;transform:scaleY(1.11);transform-origin:0 26.5px">8</div>
<div class="m" style="left:243.25999999999996px;top:282px;transform:scaleY(1.07);transform-origin:0 26.5px"><span style="color:#a31515">&quot;memo&quot;</span><span style="color:#000000">: </span><span style="color:#0451a5">&quot;none&quot;</span><span style="color:#000000">,</span></div>
<div class="m" style="right:752.7px;top:320px;color:#237893;transform:scaleY(1.11);transform-origin:0 26.5px">9</div>
<div class="m" style="left:243.25999999999996px;top:320px;transform:scaleY(1.07);transform-origin:0 26.5px"><span style="color:#a31515">&quot;operations&quot;</span><span style="color:#000000">: </span><span style="color:#0431fa">[</span></div>
<div class="m" style="right:752.7px;top:358px;color:#237893;transform:scaleY(1.11);transform-origin:0 26.5px">10</div>
<div class="m" style="left:276.98px;top:358px;transform:scaleY(1.07);transform-origin:0 26.5px"><span style="color:#319331">{</span></div>
<div class="m" style="right:752.7px;top:396px;color:#237893;transform:scaleY(1.11);transform-origin:0 26.5px">11</div>
<div class="m" style="left:310.70000000000005px;top:396px;transform:scaleY(1.07);transform-origin:0 26.5px"><span style="color:#a31515">&quot;source_account&quot;</span><span style="color:#000000">: </span><span style="color:#0451a5">null</span><span style="color:#000000">,</span></div>
<div class="m" style="right:752.7px;top:434px;color:#237893;transform:scaleY(1.11);transform-origin:0 26.5px">12</div>
<div class="m" style="left:310.70000000000005px;top:434px;transform:scaleY(1.07);transform-origin:0 26.5px"><span style="color:#a31515">&quot;body&quot;</span><span style="color:#000000">: </span><span style="color:#7b3814">{</span></div>
<div class="m" style="right:752.7px;top:472px;color:#237893;transform:scaleY(1.11);transform-origin:0 26.5px">13</div>
<div class="m" style="left:344.41999999999996px;top:472px;transform:scaleY(1.07);transform-origin:0 26.5px"><span style="color:#a31515">&quot;invoke_host_function&quot;</span><span style="color:#000000">: </span><span style="color:#0431fa">{</span></div>
<div class="m" style="right:752.7px;top:510px;color:#237893;transform:scaleY(1.11);transform-origin:0 26.5px">14</div>
<div class="m" style="left:378.14px;top:510px;transform:scaleY(1.07);transform-origin:0 26.5px"><span style="color:#a31515">&quot;host_function&quot;</span><span style="color:#000000">: </span><span style="color:#319331">{</span></div>
<div class="m" style="right:752.7px;top:548px;color:#237893;transform:scaleY(1.11);transform-origin:0 26.5px">15</div>
<div class="m" style="left:411.86px;top:548px;transform:scaleY(1.07);transform-origin:0 26.5px"><span style="color:#a31515">&quot;invoke_contract&quot;</span><span style="color:#000000">: </span><span style="color:#7b3814">{</span></div>
<div class="m" style="right:752.7px;top:586px;color:#237893;transform:scaleY(1.11);transform-origin:0 26.5px">16</div>
<div class="m" style="left:445.58000000000004px;top:586px;transform:scaleY(1.07);transform-origin:0 26.5px"><span style="color:#a31515">&quot;contract_address&quot;</span><span style="color:#000000">: </span><span style="color:#0451a5">&quot;CBCMOI6DDLFKYDLMSIESOZUB37W24ZKQTJPEFLLQJLXIOO5CTX4P7YL3&quot;</span><span style="color:#000000">,</span></div>
<div class="m" style="right:752.7px;top:624px;color:#237893;transform:scaleY(1.11);transform-origin:0 26.5px">17</div>
<div class="m" style="left:445.58000000000004px;top:624px;transform:scaleY(1.07);transform-origin:0 26.5px"><span style="color:#a31515">&quot;function_name&quot;</span><span style="color:#000000">: </span><span style="color:#0451a5">&quot;balance&quot;</span><span style="color:#000000">,</span></div>
<div class="m" style="right:752.7px;top:662px;color:#237893;transform:scaleY(1.11);transform-origin:0 26.5px">18</div>
<div class="m" style="left:445.58000000000004px;top:662px;transform:scaleY(1.07);transform-origin:0 26.5px"><span style="color:#a31515">&quot;args&quot;</span><span style="color:#000000">: </span><span style="color:#0431fa">[</span></div>
<div class="m" style="right:752.7px;top:700px;color:#237893;transform:scaleY(1.11);transform-origin:0 26.5px">19</div>
<div class="m" style="left:479.30000000000007px;top:700px;transform:scaleY(1.07);transform-origin:0 26.5px"><span style="color:#319331">{</span></div>
</div>
</div>
<div class="r" style="left:1566px;top:1094px;width:934px;height:710px;overflow:hidden;background:#fffffe">
<div class="r" style="left:104px;top:16px;width:770px;height:38px;border:4px solid #efefef;border-right:none;box-sizing:border-box"></div>
<div class="r" style="left:104px;top:54px;width:2px;height:38px;background:#939393"></div>
<div class="r" style="left:104px;top:92px;width:2px;height:38px;background:#939393"></div>
<div class="r" style="left:137px;top:92px;width:2px;height:38px;background:#d4d4d4"></div>
<div class="r" style="left:104px;top:130px;width:2px;height:38px;background:#939393"></div>
<div class="r" style="left:137px;top:130px;width:2px;height:38px;background:#d4d4d4"></div>
<div class="r" style="left:171px;top:130px;width:2px;height:38px;background:#d4d4d4"></div>
<div class="r" style="left:104px;top:168px;width:2px;height:38px;background:#939393"></div>
<div class="r" style="left:137px;top:168px;width:2px;height:38px;background:#d4d4d4"></div>
<div class="r" style="left:171px;top:168px;width:2px;height:38px;background:#d4d4d4"></div>
<div class="r" style="left:104px;top:206px;width:2px;height:38px;background:#939393"></div>
<div class="r" style="left:137px;top:206px;width:2px;height:38px;background:#d4d4d4"></div>
<div class="r" style="left:171px;top:206px;width:2px;height:38px;background:#d4d4d4"></div>
<div class="r" style="left:104px;top:244px;width:2px;height:38px;background:#939393"></div>
<div class="r" style="left:137px;top:244px;width:2px;height:38px;background:#d4d4d4"></div>
<div class="r" style="left:171px;top:244px;width:2px;height:38px;background:#d4d4d4"></div>
<div class="r" style="left:104px;top:282px;width:2px;height:38px;background:#939393"></div>
<div class="r" style="left:137px;top:282px;width:2px;height:38px;background:#d4d4d4"></div>
<div class="r" style="left:171px;top:282px;width:2px;height:38px;background:#d4d4d4"></div>
<div class="r" style="left:104px;top:320px;width:2px;height:38px;background:#939393"></div>
<div class="r" style="left:137px;top:320px;width:2px;height:38px;background:#d4d4d4"></div>
<div class="r" style="left:171px;top:320px;width:2px;height:38px;background:#d4d4d4"></div>
<div class="r" style="left:104px;top:358px;width:2px;height:38px;background:#939393"></div>
<div class="r" style="left:137px;top:358px;width:2px;height:38px;background:#d4d4d4"></div>
<div class="r" style="left:171px;top:358px;width:2px;height:38px;background:#d4d4d4"></div>
<div class="r" style="left:205px;top:358px;width:2px;height:38px;background:#d4d4d4"></div>
<div class="r" style="left:104px;top:396px;width:2px;height:38px;background:#939393"></div>
<div class="r" style="left:137px;top:396px;width:2px;height:38px;background:#d4d4d4"></div>
<div class="r" style="left:171px;top:396px;width:2px;height:38px;background:#d4d4d4"></div>
<div class="r" style="left:205px;top:396px;width:2px;height:38px;background:#d4d4d4"></div>
<div class="r" style="left:238px;top:396px;width:2px;height:38px;background:#d4d4d4"></div>
<div class="r" style="left:104px;top:434px;width:2px;height:38px;background:#939393"></div>
<div class="r" style="left:137px;top:434px;width:2px;height:38px;background:#d4d4d4"></div>
<div class="r" style="left:171px;top:434px;width:2px;height:38px;background:#d4d4d4"></div>
<div class="r" style="left:205px;top:434px;width:2px;height:38px;background:#d4d4d4"></div>
<div class="r" style="left:238px;top:434px;width:2px;height:38px;background:#d4d4d4"></div>
<div class="r" style="left:104px;top:472px;width:2px;height:38px;background:#939393"></div>
<div class="r" style="left:137px;top:472px;width:2px;height:38px;background:#d4d4d4"></div>
<div class="r" style="left:171px;top:472px;width:2px;height:38px;background:#d4d4d4"></div>
<div class="r" style="left:205px;top:472px;width:2px;height:38px;background:#d4d4d4"></div>
<div class="r" style="left:238px;top:472px;width:2px;height:38px;background:#d4d4d4"></div>
<div class="r" style="left:272px;top:472px;width:2px;height:38px;background:#d4d4d4"></div>
<div class="r" style="left:104px;top:510px;width:2px;height:38px;background:#939393"></div>
<div class="r" style="left:137px;top:510px;width:2px;height:38px;background:#d4d4d4"></div>
<div class="r" style="left:171px;top:510px;width:2px;height:38px;background:#d4d4d4"></div>
<div class="r" style="left:205px;top:510px;width:2px;height:38px;background:#d4d4d4"></div>
<div class="r" style="left:238px;top:510px;width:2px;height:38px;background:#d4d4d4"></div>
<div class="r" style="left:272px;top:510px;width:2px;height:38px;background:#d4d4d4"></div>
<div class="r" style="left:306px;top:510px;width:2px;height:38px;background:#d4d4d4"></div>
<div class="r" style="left:104px;top:548px;width:2px;height:38px;background:#939393"></div>
<div class="r" style="left:137px;top:548px;width:2px;height:38px;background:#d4d4d4"></div>
<div class="r" style="left:171px;top:548px;width:2px;height:38px;background:#d4d4d4"></div>
<div class="r" style="left:205px;top:548px;width:2px;height:38px;background:#d4d4d4"></div>
<div class="r" style="left:238px;top:548px;width:2px;height:38px;background:#d4d4d4"></div>
<div class="r" style="left:272px;top:548px;width:2px;height:38px;background:#d4d4d4"></div>
<div class="r" style="left:306px;top:548px;width:2px;height:38px;background:#d4d4d4"></div>
<div class="r" style="left:340px;top:548px;width:2px;height:38px;background:#d4d4d4"></div>
<div class="r" style="left:104px;top:586px;width:2px;height:38px;background:#939393"></div>
<div class="r" style="left:137px;top:586px;width:2px;height:38px;background:#d4d4d4"></div>
<div class="r" style="left:171px;top:586px;width:2px;height:38px;background:#d4d4d4"></div>
<div class="r" style="left:205px;top:586px;width:2px;height:38px;background:#d4d4d4"></div>
<div class="r" style="left:238px;top:586px;width:2px;height:38px;background:#d4d4d4"></div>
<div class="r" style="left:272px;top:586px;width:2px;height:38px;background:#d4d4d4"></div>
<div class="r" style="left:306px;top:586px;width:2px;height:38px;background:#d4d4d4"></div>
<div class="r" style="left:340px;top:586px;width:2px;height:38px;background:#d4d4d4"></div>
<div class="r" style="left:373px;top:586px;width:2px;height:38px;background:#d4d4d4"></div>
<div class="r" style="left:104px;top:624px;width:2px;height:38px;background:#939393"></div>
<div class="r" style="left:137px;top:624px;width:2px;height:38px;background:#d4d4d4"></div>
<div class="r" style="left:171px;top:624px;width:2px;height:38px;background:#d4d4d4"></div>
<div class="r" style="left:205px;top:624px;width:2px;height:38px;background:#d4d4d4"></div>
<div class="r" style="left:238px;top:624px;width:2px;height:38px;background:#d4d4d4"></div>
<div class="r" style="left:272px;top:624px;width:2px;height:38px;background:#d4d4d4"></div>
<div class="r" style="left:306px;top:624px;width:2px;height:38px;background:#d4d4d4"></div>
<div class="r" style="left:340px;top:624px;width:2px;height:38px;background:#d4d4d4"></div>
<div class="r" style="left:373px;top:624px;width:2px;height:38px;background:#d4d4d4"></div>
<div class="r" style="left:104px;top:662px;width:2px;height:38px;background:#939393"></div>
<div class="r" style="left:137px;top:662px;width:2px;height:38px;background:#d4d4d4"></div>
<div class="r" style="left:171px;top:662px;width:2px;height:38px;background:#d4d4d4"></div>
<div class="r" style="left:205px;top:662px;width:2px;height:38px;background:#d4d4d4"></div>
<div class="r" style="left:238px;top:662px;width:2px;height:38px;background:#d4d4d4"></div>
<div class="r" style="left:272px;top:662px;width:2px;height:38px;background:#d4d4d4"></div>
<div class="r" style="left:306px;top:662px;width:2px;height:38px;background:#d4d4d4"></div>
<div class="r" style="left:340px;top:662px;width:2px;height:38px;background:#d4d4d4"></div>
<div class="r" style="left:373px;top:662px;width:2px;height:38px;background:#d4d4d4"></div>
<div class="r" style="left:104px;top:700px;width:2px;height:38px;background:#939393"></div>
<div class="r" style="left:137px;top:700px;width:2px;height:38px;background:#d4d4d4"></div>
<div class="r" style="left:171px;top:700px;width:2px;height:38px;background:#d4d4d4"></div>
<div class="r" style="left:205px;top:700px;width:2px;height:38px;background:#d4d4d4"></div>
<div class="r" style="left:238px;top:700px;width:2px;height:38px;background:#d4d4d4"></div>
<div class="r" style="left:272px;top:700px;width:2px;height:38px;background:#d4d4d4"></div>
<div class="r" style="left:306px;top:700px;width:2px;height:38px;background:#d4d4d4"></div>
<div class="r" style="left:340px;top:700px;width:2px;height:38px;background:#d4d4d4"></div>
<div class="r" style="left:373px;top:700px;width:2px;height:38px;background:#d4d4d4"></div>
<div class="r" style="left:407px;top:700px;width:2px;height:38px;background:#d4d4d4"></div>
<div class="r" style="left:106px;top:206px;width:828px;height:38px;background:rgba(155,185,85,0.2)"></div>
<div class="r" style="left:645px;top:206px;width:16px;height:38px;background:rgba(156,204,44,0.25)"></div>
<div class="r" style="left:0;top:0;width:874px;height:710px;overflow:hidden">
<div class="m" style="right:790.9000000000001px;top:16px;color:#0b216f;transform:scaleY(1.11);transform-origin:0 26.5px">1</div>
<div class="m" style="left:104.1px;top:16px;transform:scaleY(1.07);transform-origin:0 26.5px"><span style="color:#0431fa">{</span></div>
<div class="m" style="right:790.9000000000001px;top:54px;color:#237893;transform:scaleY(1.11);transform-origin:0 26.5px">2</div>
<div class="m" style="left:137.82000000000002px;top:54px;transform:scaleY(1.07);transform-origin:0 26.5px"><span style="color:#a31515">&quot;tx&quot;</span><span style="color:#000000">: </span><span style="color:#319331">{</span></div>
<div class="m" style="right:790.9000000000001px;top:92px;color:#237893;transform:scaleY(1.11);transform-origin:0 26.5px">3</div>
<div class="m" style="left:171.54000000000005px;top:92px;transform:scaleY(1.07);transform-origin:0 26.5px"><span style="color:#a31515">&quot;tx&quot;</span><span style="color:#000000">: </span><span style="color:#7b3814">{</span></div>
<div class="m" style="right:790.9000000000001px;top:130px;color:#237893;transform:scaleY(1.11);transform-origin:0 26.5px">4</div>
<div class="m" style="left:205.26000000000008px;top:130px;transform:scaleY(1.07);transform-origin:0 26.5px"><span style="color:#a31515">&quot;source_account&quot;</span><span style="color:#000000">: </span><span style="color:#0451a5">&quot;GBXBHIHKE3LJWKV4YF7LG2HIBUM3OULLCQCXQYT3FBSWDXBYCN6FK5LP&quot;</span><span style="color:#000000">,</span></div>
<div class="m" style="right:790.9000000000001px;top:168px;color:#237893;transform:scaleY(1.11);transform-origin:0 26.5px">5</div>
<div class="m" style="left:205.26000000000008px;top:168px;transform:scaleY(1.07);transform-origin:0 26.5px"><span style="color:#a31515">&quot;fee&quot;</span><span style="color:#000000">: </span><span style="color:#098658">61609</span><span style="color:#000000">,</span></div>
<div class="m" style="right:790.9000000000001px;top:206px;color:#237893;transform:scaleY(1.11);transform-origin:0 26.5px">6</div>
<div class="m" style="left:205.26000000000008px;top:206px;transform:scaleY(1.07);transform-origin:0 26.5px"><span style="color:#a31515">&quot;seq_num&quot;</span><span style="color:#000000">: </span><span style="color:#0451a5">&quot;518106199892797&quot;</span><span style="color:#000000">,</span></div>
<div class="m" style="right:790.9000000000001px;top:244px;color:#237893;transform:scaleY(1.11);transform-origin:0 26.5px">7</div>
<div class="m" style="left:205.26000000000008px;top:244px;transform:scaleY(1.07);transform-origin:0 26.5px"><span style="color:#a31515">&quot;cond&quot;</span><span style="color:#000000">: </span><span style="color:#0451a5">&quot;none&quot;</span><span style="color:#000000">,</span></div>
<div class="m" style="right:790.9000000000001px;top:282px;color:#237893;transform:scaleY(1.11);transform-origin:0 26.5px">8</div>
<div class="m" style="left:205.26000000000008px;top:282px;transform:scaleY(1.07);transform-origin:0 26.5px"><span style="color:#a31515">&quot;memo&quot;</span><span style="color:#000000">: </span><span style="color:#0451a5">&quot;none&quot;</span><span style="color:#000000">,</span></div>
<div class="m" style="right:790.9000000000001px;top:320px;color:#237893;transform:scaleY(1.11);transform-origin:0 26.5px">9</div>
<div class="m" style="left:205.26000000000008px;top:320px;transform:scaleY(1.07);transform-origin:0 26.5px"><span style="color:#a31515">&quot;operations&quot;</span><span style="color:#000000">: </span><span style="color:#0431fa">[</span></div>
<div class="m" style="right:790.9000000000001px;top:358px;color:#237893;transform:scaleY(1.11);transform-origin:0 26.5px">10</div>
<div class="m" style="left:238.9800000000001px;top:358px;transform:scaleY(1.07);transform-origin:0 26.5px"><span style="color:#319331">{</span></div>
<div class="m" style="right:790.9000000000001px;top:396px;color:#237893;transform:scaleY(1.11);transform-origin:0 26.5px">11</div>
<div class="m" style="left:272.69999999999993px;top:396px;transform:scaleY(1.07);transform-origin:0 26.5px"><span style="color:#a31515">&quot;source_account&quot;</span><span style="color:#000000">: </span><span style="color:#0451a5">null</span><span style="color:#000000">,</span></div>
<div class="m" style="right:790.9000000000001px;top:434px;color:#237893;transform:scaleY(1.11);transform-origin:0 26.5px">12</div>
<div class="m" style="left:272.69999999999993px;top:434px;transform:scaleY(1.07);transform-origin:0 26.5px"><span style="color:#a31515">&quot;body&quot;</span><span style="color:#000000">: </span><span style="color:#7b3814">{</span></div>
<div class="m" style="right:790.9000000000001px;top:472px;color:#237893;transform:scaleY(1.11);transform-origin:0 26.5px">13</div>
<div class="m" style="left:306.41999999999996px;top:472px;transform:scaleY(1.07);transform-origin:0 26.5px"><span style="color:#a31515">&quot;invoke_host_function&quot;</span><span style="color:#000000">: </span><span style="color:#0431fa">{</span></div>
<div class="m" style="right:790.9000000000001px;top:510px;color:#237893;transform:scaleY(1.11);transform-origin:0 26.5px">14</div>
<div class="m" style="left:340.14px;top:510px;transform:scaleY(1.07);transform-origin:0 26.5px"><span style="color:#a31515">&quot;host_function&quot;</span><span style="color:#000000">: </span><span style="color:#319331">{</span></div>
<div class="m" style="right:790.9000000000001px;top:548px;color:#237893;transform:scaleY(1.11);transform-origin:0 26.5px">15</div>
<div class="m" style="left:373.86px;top:548px;transform:scaleY(1.07);transform-origin:0 26.5px"><span style="color:#a31515">&quot;invoke_contract&quot;</span><span style="color:#000000">: </span><span style="color:#7b3814">{</span></div>
<div class="m" style="right:790.9000000000001px;top:586px;color:#237893;transform:scaleY(1.11);transform-origin:0 26.5px">16</div>
<div class="m" style="left:407.58000000000004px;top:586px;transform:scaleY(1.07);transform-origin:0 26.5px"><span style="color:#a31515">&quot;contract_address&quot;</span><span style="color:#000000">: </span><span style="color:#0451a5">&quot;CBCMOI6DDLFKYDLMSIESOZUB37W24ZKQTJPEFLLQJLXIOO5CTX4P7YL3&quot;</span><span style="color:#000000">,</span></div>
<div class="m" style="right:790.9000000000001px;top:624px;color:#237893;transform:scaleY(1.11);transform-origin:0 26.5px">17</div>
<div class="m" style="left:407.58000000000004px;top:624px;transform:scaleY(1.07);transform-origin:0 26.5px"><span style="color:#a31515">&quot;function_name&quot;</span><span style="color:#000000">: </span><span style="color:#0451a5">&quot;balance&quot;</span><span style="color:#000000">,</span></div>
<div class="m" style="right:790.9000000000001px;top:662px;color:#237893;transform:scaleY(1.11);transform-origin:0 26.5px">18</div>
<div class="m" style="left:407.58000000000004px;top:662px;transform:scaleY(1.07);transform-origin:0 26.5px"><span style="color:#a31515">&quot;args&quot;</span><span style="color:#000000">: </span><span style="color:#0431fa">[</span></div>
<div class="m" style="right:790.9000000000001px;top:700px;color:#237893;transform:scaleY(1.11);transform-origin:0 26.5px">19</div>
<div class="m" style="left:441.30000000000007px;top:700px;transform:scaleY(1.07);transform-origin:0 26.5px"><span style="color:#319331">{</span></div>
</div>
</div>
<div class="r" style="left:1538px;top:1094px;width:1px;height:710px;background:#e6e6e6"></div>
<div class="r" style="left:1539px;top:1094px;width:27px;height:4px;background:#505050"></div>
<div class="r" style="left:1556px;top:1094px;width:10px;height:710px;background:linear-gradient(to right,rgba(0,0,0,0),rgba(0,0,0,0.06))"></div>
<div class="r" style="left:2412px;top:1094px;width:1px;height:710px;background:#e6e6e6"></div>
<div class="r" style="left:2413px;top:1094px;width:27px;height:4px;background:#505050"></div>
<div class="r" style="left:2440px;top:1094px;width:60px;height:122px;background:#bdbdbd"></div>
<div class="r" style="left:2440px;top:1128px;width:30px;height:8px;background:#c98383"></div>
<div class="r" style="left:2470px;top:1128px;width:30px;height:8px;background:#a5b680"></div>
<div class="r" style="left:2440px;top:1216px;width:60px;height:588px;background:#f9f9f9"></div>
<div class="r" style="left:815px;top:1318px;width:18px;height:2px;background:#555"></div>
<div class="r" style="left:1651px;top:1318px;width:18px;height:2px;background:#555"></div>
<div class="r" style="left:1659px;top:1309px;width:2px;height:18px;background:#555"></div>
</div>
<div class="r" style="left:690px;top:1838px;width:346px;height:64px;border:2px solid #e2e2e2;border-radius:10px;box-sizing:border-box;background:#fcfcfc"></div>
<svg class="r" style="left:712px;top:1856px;" width="28" height="28" viewBox="0 0 28 28" fill="none"><path d="M7.5 19 H6 A3.5 3.5 0 0 1 2.5 15.5 V6 A3.5 3.5 0 0 1 6 2.5 H15.5 A3.5 3.5 0 0 1 19 6 V7.5" stroke="#8f8f8f" stroke-width="2.4"/><rect x="10.5" y="10.5" width="15" height="15" rx="3.5" stroke="#8f8f8f" stroke-width="2.4"/></svg>
<div class="t" style="left:748.0px;top:1855.0px;font-size:29.5px;line-height:29.5px;color:#171717;font-weight:400;letter-spacing:0.08px;font-family:'Liberation Sans', sans-serif;-webkit-text-stroke:1.0px #171717;">Copy Original JSON</div>
<div class="r" style="left:2138px;top:1838px;width:364px;height:64px;border:2px solid #e2e2e2;border-radius:10px;box-sizing:border-box;background:#fcfcfc"></div>
<svg class="r" style="left:2159px;top:1856px;" width="28" height="28" viewBox="0 0 28 28" fill="none"><path d="M7.5 19 H6 A3.5 3.5 0 0 1 2.5 15.5 V6 A3.5 3.5 0 0 1 6 2.5 H15.5 A3.5 3.5 0 0 1 19 6 V7.5" stroke="#8f8f8f" stroke-width="2.4"/><rect x="10.5" y="10.5" width="15" height="15" rx="3.5" stroke="#8f8f8f" stroke-width="2.4"/></svg>
<div class="t" style="left:2196.0px;top:1855.0px;font-size:29.5px;line-height:29.5px;color:#171717;font-weight:400;letter-spacing:0.05px;font-family:'Liberation Sans', sans-serif;-webkit-text-stroke:1.0px #171717;">Copy Changed JSON</div>
</body></html>
